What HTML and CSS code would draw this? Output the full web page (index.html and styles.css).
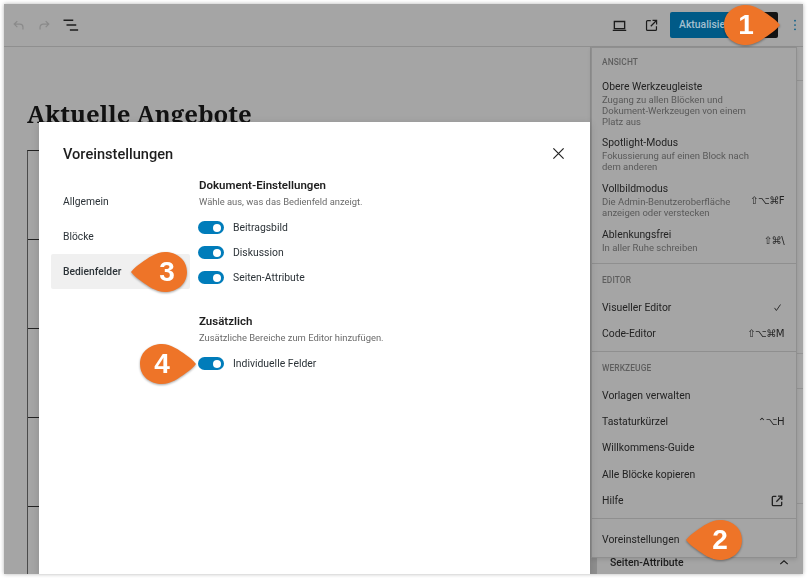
FILE: index.html
```html
<!DOCTYPE html>
<html lang="de">
<head>
<meta charset="utf-8">
<title>Voreinstellungen</title>
<link rel="stylesheet" href="styles.css">
</head>
<body>
<div class="window">
  <header class="toolbar">
    <svg class="ico dim" viewBox="0 0 24 24"><path d="M18.3 17.5v-3.2a4.3 4.3 0 0 0-4.3-4.3H6.5M10.3 5.8 6 10l4.300 4.200" fill="none" stroke="currentColor" stroke-width="1.700"/></svg>
    <svg class="ico dim" viewBox="0 0 24 24"><path d="M5.700 17.500v-3.200a4.300 4.300 0 0 1 4.300-4.300h7.500M13.700 5.800 18 10l-4.300 4.200" fill="none" stroke="currentColor" stroke-width="1.700"/></svg>
    <svg class="ico list" viewBox="0 0 24 24"><path d="M2 5.500h13M6 12h13M10.500 18.500h11" fill="none" stroke="currentColor" stroke-width="2"/></svg>
    <div class="spacer"></div>
    <svg class="ico dark laptop" viewBox="0 0 24 24"><path d="M5.500 7h13v9h-13zM3.500 18.200h17" fill="none" stroke="currentColor" stroke-width="1.700"/></svg>
    <svg class="ico dark ext" viewBox="0 0 24 24"><path d="M11 5H6.500A1.500 1.500 0 0 0 5 6.500v11A1.500 1.500 0 0 0 6.500 19h11a1.500 1.500 0 0 0 1.500-1.500V13M13.500 4.800h5.700v5.700M19 5l-8 8" fill="none" stroke="currentColor" stroke-width="1.700"/></svg>
    <div class="publish">Aktualisier</div>
    <div class="black"></div>
    <svg class="kebab" viewBox="0 0 4 14"><circle cx="2" cy="2" r="1"/><circle cx="2" cy="7" r="1"/><circle cx="2" cy="12" r="1"/></svg>
  </header>
  <div class="editor">
    <main class="canvas">
      <h1 class="post-title">Aktuelle Angebote</h1>
      <div class="table">
        <div class="cell"></div><div class="cell"></div><div class="cell"></div><div class="cell"></div><div class="cell"></div>
      </div>
    </main>
    <aside class="sidebar">
      <div class="strip s1"></div>
      <div class="strip s2"></div>
      <div class="strip s3"></div>
      <div class="strip s4"></div>
      <div class="panel-row"><span>Seiten-Attribute</span>
        <svg class="chev" viewBox="0 0 12 8"><path d="M1.500 6 6 2l4.500 4" fill="none" stroke="currentColor" stroke-width="1.400"/></svg>
      </div>
    </aside>
  </div>

  <nav class="menu">
    <section class="sec sec-view">
      <h3 class="sec-title">ANSICHT</h3>
      <div class="item tall t1"><div><div class="name">Obere Werkzeugleiste</div><div class="desc">Zugang zu allen Blöcken und<br>Dokument-Werkzeugen von einem<br>Platz aus</div></div></div>
      <div class="item tall t2"><div><div class="name">Spotlight-Modus</div><div class="desc">Fokussierung auf einen Block nach<br>dem anderen</div></div></div>
      <div class="item tall t3"><div><div class="name">Vollbildmodus</div><div class="desc">Die Admin-Benutzeroberfläche<br>anzeigen oder verstecken</div></div><span class="key">⇧⌥⌘F</span></div>
      <div class="item tall t4"><div><div class="name">Ablenkungsfrei</div><div class="desc">In aller Ruhe schreiben</div></div><span class="key">⇧⌘\</span></div>
    </section>
    <section class="sec sec-editor">
      <h3 class="sec-title">EDITOR</h3>
      <div class="item"><span class="name">Visueller Editor</span><svg class="check" viewBox="0 0 12 12"><path d="M2 6.500 4.500 10 10 2" fill="none" stroke="currentColor" stroke-width="1.200"/></svg></div>
      <div class="item"><span class="name">Code-Editor</span><span class="key">⇧⌥⌘M</span></div>
    </section>
    <section class="sec sec-tools">
      <h3 class="sec-title">WERKZEUGE</h3>
      <div class="item"><span class="name">Vorlagen verwalten</span></div>
      <div class="item"><span class="name">Tastaturkürzel</span><span class="key">⌃⌥H</span></div>
      <div class="item"><span class="name">Willkommens-Guide</span></div>
      <div class="item"><span class="name">Alle Blöcke kopieren</span></div>
      <div class="item"><span class="name">Hilfe</span><svg class="help" viewBox="0 0 24 24"><path d="M11 5H6.500A1.500 1.500 0 0 0 5 6.500v11A1.500 1.500 0 0 0 6.500 19h11a1.500 1.500 0 0 0 1.500-1.500V13M13.500 4.800h5.700v5.700M19 5l-8 8" fill="none" stroke="currentColor" stroke-width="2"/></svg></div>
    </section>
    <section class="sec sec-last">
      <div class="item"><span class="name">Voreinstellungen</span></div>
    </section>
  </nav>

  <div class="modal">
    <div class="modal-head">
      <h2>Voreinstellungen</h2>
      <svg class="close" viewBox="0 0 14 14"><path d="M1.500 1.500l11 11M12.500 1.500l-11 11" fill="none" stroke="currentColor" stroke-width="1.300"/></svg>
    </div>
    <div class="modal-body">
      <ul class="tabs">
        <li>Allgemein</li>
        <li>Blöcke</li>
        <li class="active">Bedienfelder</li>
      </ul>
      <div class="prefs">
        <section class="group">
          <h4>Dokument-Einstellungen</h4>
          <p>Wähle aus, was das Bedienfeld anzeigt.</p>
          <label class="opt"><span class="toggle"></span>Beitragsbild</label>
          <label class="opt"><span class="toggle"></span>Diskussion</label>
          <label class="opt"><span class="toggle"></span>Seiten-Attribute</label>
        </section>
        <section class="group">
          <h4>Zusätzlich</h4>
          <p>Zusätzliche Bereiche zum Editor hinzufügen.</p>
          <label class="opt"><span class="toggle"></span>Individuelle Felder</label>
        </section>
      </div>
    </div>
  </div>

  <div class="pin pin1"><svg viewBox="0 0 60 44"><path d="M2 22C2 9 13 2 24 2c9 0 17 6 24 11 3 2 7 5 10 9-3 4-7 7-10 9-7 5-15 11-24 11C13 42 2 35 2 22z"/></svg><b>1</b></div>
  <div class="pin pin2 left"><svg viewBox="0 0 60 44"><path d="M2 22C2 9 13 2 24 2c9 0 17 6 24 11 3 2 7 5 10 9-3 4-7 7-10 9-7 5-15 11-24 11C13 42 2 35 2 22z"/></svg><b>2</b></div>
  <div class="pin pin3 left"><svg viewBox="0 0 60 44"><path d="M2 22C2 9 13 2 24 2c9 0 17 6 24 11 3 2 7 5 10 9-3 4-7 7-10 9-7 5-15 11-24 11C13 42 2 35 2 22z"/></svg><b>3</b></div>
  <div class="pin pin4"><svg viewBox="0 0 60 44"><path d="M2 22C2 9 13 2 24 2c9 0 17 6 24 11 3 2 7 5 10 9-3 4-7 7-10 9-7 5-15 11-24 11C13 42 2 35 2 22z"/></svg><b>4</b></div>
</div>
</body>
</html>
```
FILE: styles.css
```css
* { box-sizing: border-box; }
html, body { margin: 0; padding: 0; }
body {
  width: 808px; height: 578px; overflow: hidden; background: #fff;
  font-family: Roboto, "Liberation Sans", sans-serif; color: #1e1e1e;
}
.window {
  position: relative; width: 799px; height: 570px; margin: 4px 0 0 4px;
  background: #a5a5a5; overflow: hidden;
  box-shadow: 0 0 4px rgba(0,0,0,.3);
  display: flex; flex-direction: column;
  filter: blur(.3px);
}
.toolbar {
  height: 43px; flex: none; display: flex; align-items: center;
  padding: 0 0 0 6px; border-bottom: 1px solid #8f8f8f;
}
.ico { width: 17px; height: 17px; flex: none; }
.dim { color: #8a8a8a; margin-right: 9px; }
.list { color: #1c1c1c; margin-left: 0; width: 18px; height: 18px; }
.spacer { flex: 1; }
.dark { color: #1c1c1c; margin-right: 15px; }
.laptop { width: 19px; height: 19px; margin-left: -1px; margin-right: 14px; }
.ext { margin-right: 10px; }
.publish {
  width: 84px; height: 26px; background: #005a87; color: #a5c0d0;
  border-radius: 2px 0 0 2px; font-size: 10.400px; font-weight: 500;
  line-height: 26px; padding-left: 9px; overflow: hidden; white-space: nowrap;
}
.black { width: 24px; height: 26px; background: #141414; border-radius: 0 2px 2px 0; margin-right: 15px; }
.kebab { width: 4px; height: 12px; fill: #005a87; margin-right: 6px; flex: none; }
.editor { flex: 1; display: flex; min-height: 0; }
.canvas { flex: 1; padding: 52px 0 0 23px; border-right: 6px solid #8e8e8e; overflow: hidden; }
.post-title {
  margin: 0; font-family: "Noto Serif", "DejaVu Serif", serif; font-size: 24px;
  line-height: 30px; font-weight: 700; color: #111; white-space: nowrap;
}
.table { margin-top: 21px; border-left: 1px solid #4a4a4a; border-top: 1px solid #222; width: 100%; }
.cell { height: 89px; border-bottom: 1px solid #222; }
.sidebar { width: 207px; flex: none; border-left: 1px solid #8f8f8f; position: relative; display: flex; flex-direction: column; justify-content: flex-end; }
.strip { position: absolute; left: 0; right: 0; height: 1px; background: #939393; }
.s1 { top: 33px; } .s2 { top: 306px; } .s3 { top: 341px; } .s4 { top: 456px; }
.panel-row { height: 24px; display: flex; justify-content: space-between; align-items: center; font-size: 10.400px; font-weight: 500; padding: 2px 14px 2px 13px; color: #1c1c1c; }
.chev { width: 10px; height: 7px; }

.menu {
  position: absolute; left: 587px; top: 43px; width: 206px; height: 511px;
  background: #a5a5a5; border: 1px solid #8f8f8f; box-shadow: 0 2px 4px rgba(0,0,0,.1);
  display: flex; flex-direction: column; color: #232323;
}
.sec { border-bottom: 1px solid #8f8f8f; padding: 9px 12px 0 10px; flex: none; }
.sec:last-child { border-bottom: 0; }
.sec-view { height: 216px; }
.sec-editor { height: 88px; padding-top: 11px; }
.sec-tools { height: 167px; padding-top: 11px; }
.sec-title { margin: 0 0 8px; font-size: 8.400px; line-height: 11px; font-weight: 500; color: #5e5e5e; letter-spacing: .1px; }
.item { display: flex; justify-content: space-between; align-items: center; height: 26.400px; font-size: 10.400px; }
.item.tall { height: auto; }
.t1 { margin-top: 12px; margin-bottom: 9px; }
.t2, .t3 { margin-bottom: 10px; }
.name { font-size: 10.400px; line-height: 13px; }
.desc { font-size: 9.500px; line-height: 11px; color: #595959; margin-top: 1px; }
.key { font-size: 10.200px; color: #232323; white-space: nowrap; font-family: "DejaVu Sans", sans-serif; letter-spacing: -.6px; }
.check { width: 9px; height: 9px; margin-right: 2px; }
.help { width: 16px; height: 16px; margin-right: -1px; }
.sec-last { padding-top: 7px; }

.modal {
  position: absolute; left: 35px; top: 118px; width: 551px; height: 452px;
  background: #fff; color: #1e1e1e; box-shadow: 0 2px 8px rgba(0,0,0,.15);
}
.modal-head { height: 63px; display: flex; justify-content: space-between; align-items: center; padding: 0 25px 0 24px; }
.modal-head h2 { margin: 0; font-size: 14.600px; font-weight: 500; }
.close { width: 13px; height: 13px; color: #222; }
.modal-body { display: flex; }
.tabs { list-style: none; margin: 0; padding: 0; width: 139px; margin-left: 12px; flex: none; }
.tabs li { height: 35px; line-height: 35px; padding-left: 12px; font-size: 10.300px; color: #2c3338; font-weight: 400; }
.tabs li:first-child { margin-top: -1px; }
.tabs .active { background: #f0f0f0; border-radius: 2px; font-weight: 500; }
.prefs { padding-left: 9px; margin-top: -8px; }
.group { margin-bottom: 24px; }
.group h4 { margin: 1px 0 0; font-size: 11.500px; line-height: 14px; font-weight: 600; color: #1e1e1e; }
.group p { margin: 3px 0 6px; font-size: 9.400px; line-height: 14px; color: #6a6a6a; }
.opt { display: flex; align-items: center; height: 25px; font-size: 10.400px; color: #2c3338; }
.toggle { width: 26px; height: 13px; border-radius: 7px; background: #007cba; position: relative; margin-right: 9px; margin-left: -1px; flex: none; }
.toggle::after { content: ""; position: absolute; right: 3px; top: 2.500px; width: 8px; height: 8px; border-radius: 50%; background: #fff; }

.pin { position: absolute; width: 60px; height: 44px; filter: drop-shadow(0 1px 1px rgba(0,0,0,.35)); }
.pin svg { display: block; width: 100%; height: 100%; fill: #ee7428; }
.pin b { position: absolute; left: 2px; top: 0; width: 44px; line-height: 44px; text-align: center; color: #fff; font-family: "Liberation Sans", sans-serif; font-size: 28px; font-weight: 700; }
.left svg { transform: scaleX(-1); }
.left b { left: 14px; }
.pin1 { left: 718px; top: -1px; }
.pin2 { left: 680px; top: 514px; }
.pin3 { left: 125px; top: 246px; }
.pin3 b { left: 16px; }
.pin4 { left: 134px; top: 338px; }
```
